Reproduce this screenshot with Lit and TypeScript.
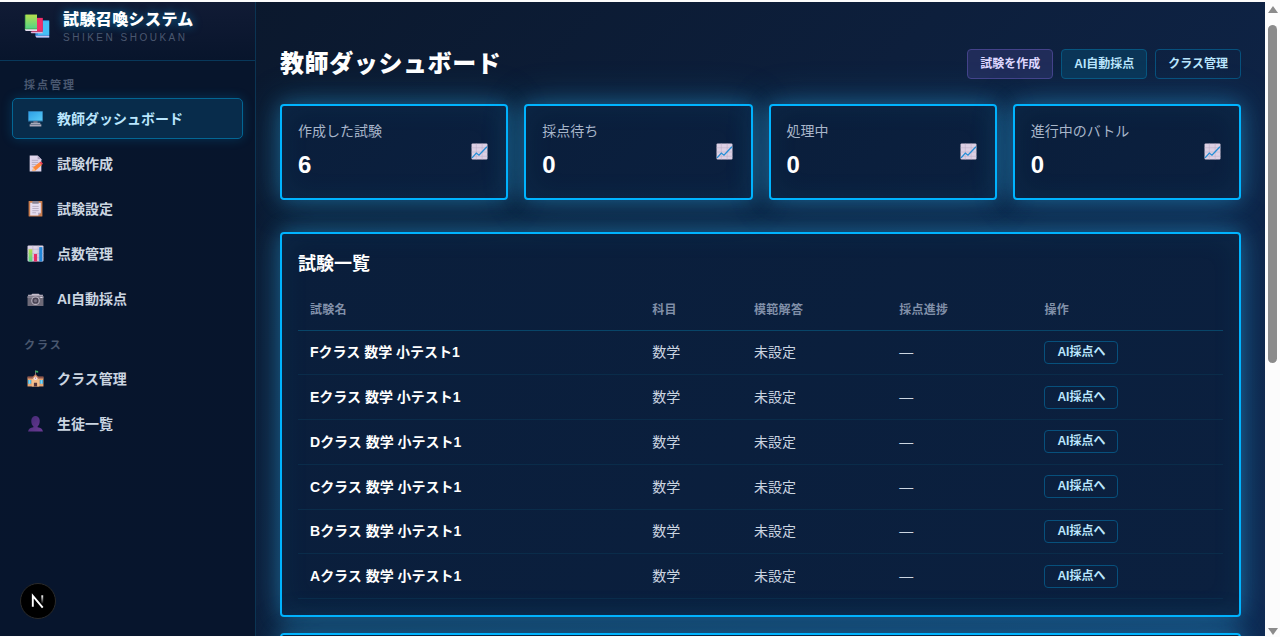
import { LitElement, html, svg, css } from "lit";
import { customElement } from "lit/decorators.js";

const icons: Record<string, unknown> = {
  books: svg`
    <path d="M14 9h17v21H16l-2-2z" fill="#2f87d8"/><path d="M17 10h14v17H17z" fill="#45bff6"/><path d="M14 28h17v2H15z" fill="#c8c4ee"/>
    <path d="M8 6h15v18H10l-2-3z" fill="#b61b4b"/><path d="M11 6h12v16H11z" fill="#ef2e68"/><path d="M8 23h15v2H9z" fill="#d9b4dc"/>
    <path d="M1 2h15v20H3l-2-2z" fill="#44a851"/><path d="M2 2h14v17H2z" fill="url(#green)"/><path d="M1 20h15v2H2z" fill="#e4dcef"/>`,
  pc: svg`<rect x="2" y="2" width="28" height="20" rx="1" fill="#27618f"/><rect x="3" y="3" width="26" height="17" fill="url(#sky)"/>
    <path d="M12 21h8v3h-8z" fill="#77788c"/><path d="M7 24h18v2H7z" fill="#c7c5d3"/><path d="M5 27h22v4H5z" fill="#aaa8b9"/>`,
  memo: svg`<path d="M5 1h15l7 7v23H5z" fill="#dfd5eb"/><path d="M20 1l7 7h-7z" fill="#afa2bf"/>
    <path d="M9 10h12M9 14h12M9 18h9M9 22h6" stroke="#afa4bd" stroke-width="1.5"/><path d="M10 30l2-7 11-9 5 5-12 10z" fill="#ff8838"/><path d="M23 14l3-2 4 4-2 3z" fill="#ee4051"/><path d="M10 30l2-7 4 6z" fill="#fbc28d"/>`,
  clip: svg`<rect x="3" y="2" width="26" height="29" rx="1" fill="#c87c4d"/><path d="M6 5h20v19l-5 5H6z" fill="#e5ddef"/><path d="M26 24h-5v5z" fill="#aa9eba"/><path d="M10 2h12v5H10z" fill="#898494"/>
    <path d="M10 12h12M10 16h12M10 20h12M10 24h7" stroke="#afa4bd" stroke-width="1.5"/>`,
  bars: svg`<rect x="1" y="1" width="30" height="30" rx="2" fill="#ded4e7"/><path d="M1 8h30M1 16h30M1 24h30M11 1v30M21 1v30" stroke="#b7abc4"/>
    <path d="M3 8h7v23H3z" fill="url(#green)"/><path d="M13 17h6v14h-6z" fill="#e92c67"/><path d="M23 4h6v27h-6z" fill="#2187da"/>`,
  camera: svg`<path d="M2 9h6l2-2h12l2 2h6v5H2z" fill="#c4bdcb"/><rect x="1" y="11" width="30" height="19" rx="1" fill="#6e6a78"/><path d="M1 12h30v3H1z" fill="#8d8797"/>
    <circle cx="16" cy="20" r="8" fill="#bcb6c3"/><circle cx="16" cy="20" r="6" fill="#484353"/><circle cx="16" cy="20" r="3" fill="#777181"/><path d="M25 13h4v2h-4z" fill="#e1dce5"/>`,
  school: svg`<path d="M1 14h30v17H1z" fill="#e6a574"/><path d="M1 12h30v4H1z" fill="#91574c"/><path d="M9 16l7-8 7 8v15H9z" fill="#f4bd8a"/><path d="M8 16l8-9 8 9-2 1-6-7-6 7z" fill="#a46354"/>
    <path d="M16 1v7" stroke="#9b8b8c" stroke-width="1.5"/><path d="M16 1l5 1v3l-5-1z" fill="#38ae5c"/><circle cx="16" cy="16" r="3" fill="#eee6f3"/><path d="M16 14v2h1" stroke="#a63355" fill="none"/>
    <path d="M13 24h6v7h-6z" fill="#53353d"/><path d="M2 19h6v7H2zM24 19h6v7h-6z" fill="#43b6e9"/><path d="M5 19v7M27 19v7" stroke="#dff"/>`,
  user: svg`<path d="M8 11c0-12 16-12 16 0 0 6-2 9-4 10v2c6 1 9 3 10 8H2c1-5 4-7 10-8v-2c-2-1-4-4-4-10z" fill="url(#violet)"/>`,
  trend: svg`<rect x="1" y="1" width="30" height="30" rx="2" fill="#ddd0e4"/><path d="M1 9h30M1 17h30M1 25h30M10 1v30M21 1v30" stroke="#bdb0c9"/>
    <path d="M2 28l8-9 5 4 15-16" fill="none" stroke="#238ed6" stroke-width="2.5"/>`,
};

const icon = (name: string) => html`<svg class="icon" viewBox="0 0 32 32" aria-hidden="true">
  <defs>
    <linearGradient id="green" x2="0" y2="1"><stop stop-color="#b5df4d"/><stop offset="1" stop-color="#55d486"/></linearGradient>
    <linearGradient id="sky" x2="1" y2="1"><stop stop-color="#2d9ee5"/><stop offset="1" stop-color="#55ccf9"/></linearGradient>
    <linearGradient id="violet" x2="1" y2="1"><stop stop-color="#432a75"/><stop offset="1" stop-color="#6b3a94"/></linearGradient>
  </defs>${icons[name]}</svg>`;

const groups = [
  { label: "採点管理", items: [["pc", "教師ダッシュボード"], ["memo", "試験作成"], ["clip", "試験設定"], ["bars", "点数管理"], ["camera", "AI自動採点"]] },
  { label: "クラス", items: [["school", "クラス管理"], ["user", "生徒一覧"]] },
];
const stats = [["作成した試験", 6], ["採点待ち", 0], ["処理中", 0], ["進行中のバトル", 0]];
const classes = ["F", "E", "D", "C", "B", "A"];

@customElement("app-root")
export class AppRoot extends LitElement {
  static styles = css`
    :host { display: block; height: 100vh; box-sizing: border-box; overflow: hidden; background: #fcfcfc;
      padding: 2px 0 1px; font-family: "Liberation Sans", "Noto Sans CJK JP", sans-serif; color: #fff; font-size: 14px; line-height: 20px; }
    * { box-sizing: border-box; }
    a { color: inherit; text-decoration: none; }
    .window { display: grid; grid-template-columns: minmax(0, 1fr) 15px; height: 100%; }
    .shell { display: grid; grid-template-columns: 256px minmax(0, 1fr); overflow: hidden; min-height: 0;
      background: linear-gradient(135deg, #0a1628 0%, #0d1f3c 50%, #0f2850 100%); }
    .sidebar { border-right: 1px solid #0b3453; background: linear-gradient(180deg, #0a1430, #07152c 60px, #07152d); }
    .brand { display: flex; gap: 13px; height: 59px; padding: 8px 24px; border-bottom: 1px solid #08385a; background: linear-gradient(#111b35, #08152c); }
    .icon { display: block; width: 100%; height: 100%; }
    .logo { width: 26px; height: 26px; margin-top: 3px; flex: none; }
    .name { font-size: 16px; font-weight: 900; line-height: 20px; letter-spacing: 0.025em; text-shadow: 0 0 10px #00b4ff99; }
    .sub { color: #4a5870; font-size: 10px; line-height: 16px; letter-spacing: 0.25em; }
    nav { padding: 16px 12px; }
    .label { margin: 0; padding: 0 12px; font-size: 11px; line-height: 16px; font-weight: 600; letter-spacing: 2px; color: #4a5870; }
    ul { list-style: none; padding: 0; margin: 5px 0 18px; display: grid; gap: 4px; }
    .item { display: flex; align-items: center; gap: 13px; height: 41px; padding: 0 14px; border: 1px solid transparent; border-radius: 5px; font-weight: 600; color: #cbd5e1; }
    .item.active { color: #bae6fd; background: #082c4b; border-color: #036694; box-shadow: 0 0 12px #00b4ff33; }
    .glyph { width: 17px; height: 17px; flex: none; }
    main { padding: 46px 24px 0; min-width: 0; overflow: hidden; }
    header { display: flex; justify-content: space-between; align-items: center; height: 32px; margin-bottom: 24px; }
    h1 { margin: 0; font-size: 24px; line-height: 32px; font-weight: 900; letter-spacing: 0.025em; }
    .actions { display: flex; gap: 8px; }
    .button { display: block; font: inherit; font-size: 12px; font-weight: 600; line-height: 16px; padding: 6px 12px; color: #bae6fd; border: 1px solid #07507c; border-radius: 4px; background: transparent; cursor: pointer; }
    .button.purple { color: #ddd6fe; background: #202c59; border-color: #44428a; }
    .button.blue { background: #0a3557; border-color: #07567f; }
    .button.small { line-height: 15px; padding: 3px 12px; }
    .cards { display: grid; grid-template-columns: repeat(4, minmax(0, 1fr)); gap: 16px; margin-bottom: 32px; }
    .card { border: 2px solid #00b4ff; border-radius: 4px; background: linear-gradient(135deg, #0a1e3b, #0b203f);
      box-shadow: 0 0 20px #28a0dc66, 0 0 40px #28a0dc4d, inset 0 0 30px #28a0dc14; padding: 16px; }
    .stat { display: flex; justify-content: space-between; align-items: center; height: 96px; padding: 14px 16px 16px; }
    .caption { color: #a8b6ca; }
    .value { font-size: 24px; line-height: 32px; font-weight: 700; margin-top: 8px; }
    .stat .glyph { margin-right: 2px; }
    .exams { height: 385px; margin-bottom: 16px; }
    h2 { font-size: 18px; line-height: 28px; margin: 0 0 12px; font-weight: 700; }
    table { width: 100%; height: 309px; border-collapse: collapse; table-layout: fixed; }
    th, td { text-align: left; padding: 0 12px; }
    th { height: 40px; font-size: 12px; font-weight: 600; letter-spacing: 0.025em; color: #8190a9; border-bottom: 1px solid #084568; }
    td { color: #cbd5e1; border-bottom: 1px solid #0a2c4a; }
    td.title { color: #fff; font-weight: 600; }
    .c1 { width: 37%; } .c2 { width: 11%; } .c3, .c4 { width: 15.7%; }
    .next { height: 100px; }
    .scroll { display: flex; flex-direction: column; align-items: center; justify-content: space-between; background: #fcfcfc; padding: 4px 0 1px; }
    .thumb { width: 9px; height: 338px; border-radius: 5px; background: #8b8b8b; margin: 12px 0 auto; }
    .arrow { width: 10px; height: 7px; fill: #8b8b8b; flex: none; }
    .dev { position: fixed; left: 20px; bottom: 18px; width: 36px; height: 36px; border-radius: 50%; border: 1px solid #2b2b2b; padding: 0; background: #000; }
  `;

  render() {
    return html`<div class="window">
      <div class="shell">
        <aside class="sidebar">
          <div class="brand"><span class="logo">${icon("books")}</span><div><div class="name">試験召喚システム</div><div class="sub">SHIKEN SHOUKAN</div></div></div>
          <nav>${groups.map((g, n) => html`<p class="label">${g.label}</p><ul>${g.items.map(([i, t], k) => html`<li><a href="#" class="item ${n + k === 0 ? "active" : ""}"><span class="glyph">${icon(i)}</span>${t}</a></li>`)}</ul>`)}</nav>
        </aside>
        <main>
          <header><h1>教師ダッシュボード</h1><div class="actions"><button class="button purple">試験を作成</button><button class="button blue">AI自動採点</button><button class="button">クラス管理</button></div></header>
          <section class="cards">${stats.map(([t, v]) => html`<article class="card stat"><div><div class="caption">${t}</div><div class="value">${v}</div></div><span class="glyph">${icon("trend")}</span></article>`)}</section>
          <section class="card exams"><h2>試験一覧</h2>
            <table><thead><tr><th class="c1">試験名</th><th class="c2">科目</th><th class="c3">模範解答</th><th class="c4">採点進捗</th><th>操作</th></tr></thead>
            <tbody>${classes.map((c) => html`<tr><td class="title">${c}クラス 数学 小テスト1</td><td>数学</td><td>未設定</td><td>—</td><td><button class="button small">AI採点へ</button></td></tr>`)}</tbody></table>
          </section>
          <section class="card next"></section>
        </main>
      </div>
      <div class="scroll"><svg class="arrow" viewBox="0 0 10 7"><path d="M5 0l5 7H0z"/></svg><div class="thumb"></div><svg class="arrow" viewBox="0 0 10 7"><path d="M5 7L0 0h10z"/></svg></div>
      <button class="dev" aria-label="Next.js"><svg viewBox="0 0 36 36" fill="none"><defs><linearGradient id="fade" x2="0" y2="1"><stop stop-color="#fff"/><stop offset="1" stop-color="#fff" stop-opacity="0"/></linearGradient></defs><path d="M12.500 24V12.500L23 25" stroke="#fff" stroke-width="2"/><path d="M21.500 12h2v9h-2z" fill="url(#fade)"/></svg></button>
    </div>`;
  }
}
